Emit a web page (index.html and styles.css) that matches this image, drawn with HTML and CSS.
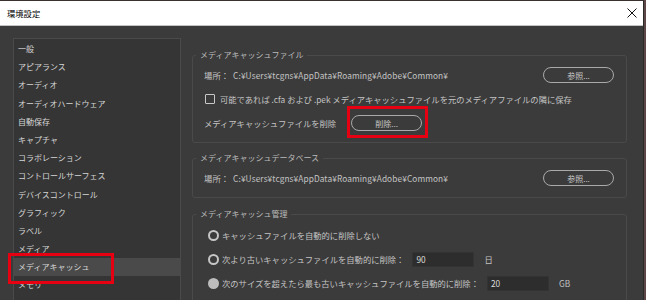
FILE: index.html
```html
<!DOCTYPE html>
<html lang="ja">
<head>
    <meta charset="UTF-8">
    <title>環境設定</title>
    <link rel="stylesheet" href="styles.css">
</head>
<body>
    <div class="window">
        <div class="title-bar">
            <span class="title">環境設定</span>
            <svg class="close" width="10" height="10" viewBox="0 0 10 10">
                <path d="M0.5 0.5 L9.5 9.5 M9.5 0.5 L0.5 9.5" stroke="#111" stroke-width="1" fill="none"/>
            </svg>
        </div>
        <div class="content">
            <ul class="side-list">
                <li>一般</li>
                <li>アピアランス</li>
                <li>オーディオ</li>
                <li>オーディオハードウェア</li>
                <li>自動保存</li>
                <li>キャプチャ</li>
                <li>コラボレーション</li>
                <li>コントロールサーフェス</li>
                <li>デバイスコントロール</li>
                <li>グラフィック</li>
                <li>ラベル</li>
                <li>メディア</li>
                <li class="active">メディアキャッシュ</li>
                <li>メモリ</li>
            </ul>
            <div class="main">
                <fieldset>
                    <legend>メディアキャッシュファイル</legend>
                    <div class="rows">
                        <div class="row">
                            <span class="path">場所：&nbsp; C:¥Users¥tcgns¥AppData¥Roaming¥Adobe¥Common¥</span>
                            <span class="btn push-right">参照...</span>
                        </div>
                        <div class="row">
                            <span class="check"></span>
                            <span>可能であれば .cfa および .pek メディアキャッシュファイルを元のメディアファイルの隣に保存</span>
                        </div>
                        <div class="row">
                            <span>メディアキャッシュファイルを削除</span>
                            <span class="btn gap-left">削除...</span>
                        </div>
                    </div>
                </fieldset>
                <fieldset>
                    <legend>メディアキャッシュデータベース</legend>
                    <div class="rows">
                        <div class="row">
                            <span class="path">場所：&nbsp; C:¥Users¥tcgns¥AppData¥Roaming¥Adobe¥Common¥</span>
                            <span class="btn push-right">参照...</span>
                        </div>
                    </div>
                </fieldset>
                <fieldset class="last">
                    <legend>メディアキャッシュ管理</legend>
                    <div class="rows radios">
                        <div class="row">
                            <span class="radio"></span>
                            <span>キャッシュファイルを自動的に削除しない</span>
                        </div>
                        <div class="row">
                            <span class="radio"></span>
                            <span>次より古いキャッシュファイルを自動的に削除：</span>
                            <span class="field">90</span>
                            <span class="unit">日</span>
                        </div>
                        <div class="row">
                            <span class="radio on"></span>
                            <span>次のサイズを超えたら最も古いキャッシュファイルを自動的に削除：</span>
                            <span class="field">20</span>
                            <span class="unit">GB</span>
                        </div>
                    </div>
                </fieldset>
            </div>
        </div>
        <!-- 赤枠の強調表示 -->
        <div class="mark mark-side"></div>
        <div class="mark mark-delete"></div>
    </div>
</body>
</html>
```

FILE: styles.css
```css
*{
    margin: 0;
    padding: 0;
    box-sizing: border-box;
}
body{
    width: 646px;
    height: 300px;
    overflow: hidden;
    background-color: #5c4646;
    font-family: "Noto Sans CJK JP", "Noto Sans", sans-serif;
    font-size: 8.3px;
}
.window{
    position: relative;
    width: 644px;
    height: 300px;
    display: flex;
    flex-direction: column;
    background-color: #3b3b3b;
    border-top: 1px solid #3a3030;
    border-right: 1px solid #2a2a2a;
    overflow: hidden;
}
.title-bar{
    height: 25px;
    flex-shrink: 0;
    display: flex;
    align-items: center;
    justify-content: space-between;
    padding: 0 6px 0 7px;
    background-color: #fff;
    border-bottom: 1px solid #c4c4c4;
}
.title-bar .title{
    color: #000;
    font-size: 8.3px;
}
.content{
    flex: 1;
    display: flex;
    padding: 12px 16px 0 13px;
    min-height: 0;
}
.side-list{
    width: 168px;
    flex-shrink: 0;
    list-style-type: none;
    background-color: #353535;
    border: 1px solid #4a4a4a;
    border-bottom: none;
    padding-top: 1px;
}
.side-list li{
    height: 18.2px;
    line-height: 18.2px;
    padding-left: 4px;
    color: #d6d6d6;
    font-size: 8px;
}
.side-list li.active{
    background-color: #4a4a4a;
}
.main{
    flex: 1;
    margin-left: 11px;
    padding-top: 11px;
    color: #c4c4c4;
}
fieldset{
    border: 1px solid #4a4a4a;
    border-radius: 3px;
    padding: 2px 12px 7px 3px;
    margin-bottom: 9px;
    min-width: 0;
}
fieldset.last{
    margin-bottom: 0;
    margin-top: 10px;
    height: 200px;
}
legend{
    padding: 0 4px;
    line-height: 12px;
    font-size: 8px;
    color: #bababa;
}
.rows{
    padding-left: 8px;
}
.rows.radios{
    padding-left: 12px;
    padding-top: 1px;
}
.row{
    display: flex;
    align-items: center;
    height: 24px;
    white-space: nowrap;
}
.path{
    letter-spacing: 0.1px;
}
.btn{
    width: 71px;
    height: 16px;
    display: flex;
    align-items: center;
    justify-content: center;
    border: 1px solid #a9a9a9;
    border-radius: 8px;
    font-size: 8px;
    color: #c8c8c8;
}
.push-right{
    margin-left: auto;
}
.gap-left{
    margin-left: 15px;
}
.check{
    width: 10px;
    height: 10px;
    margin: 0 5px 0 1px;
    border: 1.5px solid #c8c8c8;
    border-radius: 1px;
}
.radio{
    width: 11px;
    height: 11px;
    margin-right: 3px;
    border: 2px solid #c6c6c6;
    border-radius: 50%;
}
.radio.on{
    background-color: #bdbdbd;
    border-color: #bdbdbd;
}
.field{
    width: 62px;
    height: 15px;
    line-height: 13px;
    margin-left: 8px;
    padding-left: 3px;
    background-color: #2d2d2d;
    border: 1px solid #333;
    color: #dcdcdc;
}
.unit{
    margin-left: 10px;
}
.mark{
    position: absolute;
    border: 3px solid #e60012;
}
.mark-side{
    left: 8px;
    top: 252px;
    width: 106px;
    height: 31px;
}
.mark-delete{
    left: 347px;
    top: 105px;
    width: 81px;
    height: 32px;
}
```
